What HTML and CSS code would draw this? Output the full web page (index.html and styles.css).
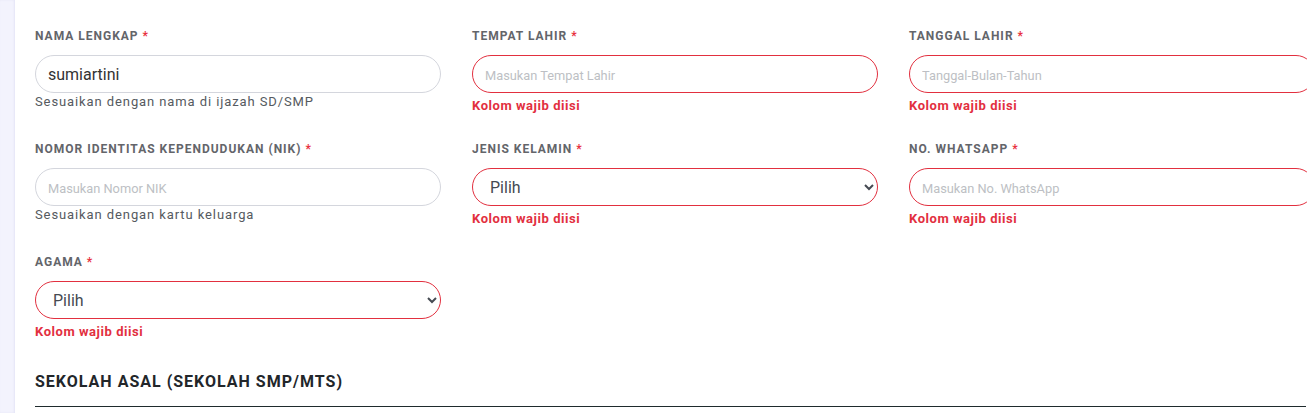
FILE: index.html
```html
<!DOCTYPE html>
<html lang="id">
<head>
<meta charset="utf-8">
<title>Formulir</title>
<link rel="stylesheet" href="styles.css">
</head>
<body>
<div class="page">
  <aside class="strip"></aside>
  <main class="content">
    <div class="grid">
      <div class="field">
        <label class="label">Nama Lengkap <span class="req">*</span></label>
        <input class="control" type="text" value="sumiartini">
        <div class="help">Sesuaikan dengan nama di ijazah SD/SMP</div>
      </div>
      <div class="field">
        <label class="label">Tempat Lahir <span class="req">*</span></label>
        <input class="control invalid" type="text" placeholder="Masukan Tempat Lahir">
        <div class="error">Kolom wajib diisi</div>
      </div>
      <div class="field">
        <label class="label">Tanggal Lahir <span class="req">*</span></label>
        <input class="control invalid" type="text" placeholder="Tanggal-Bulan-Tahun">
        <div class="error">Kolom wajib diisi</div>
      </div>

      <div class="field">
        <label class="label">Nomor Identitas Kependudukan (NIK) <span class="req">*</span></label>
        <input class="control" type="text" placeholder="Masukan Nomor NIK">
        <div class="help">Sesuaikan dengan kartu keluarga</div>
      </div>
      <div class="field">
        <label class="label">Jenis Kelamin <span class="req">*</span></label>
        <select class="control select invalid"><option>Pilih</option></select>
        <div class="error">Kolom wajib diisi</div>
      </div>
      <div class="field">
        <label class="label">No. WhatsApp <span class="req">*</span></label>
        <input class="control invalid" type="text" placeholder="Masukan No. WhatsApp">
        <div class="error">Kolom wajib diisi</div>
      </div>

      <div class="field">
        <label class="label">Agama <span class="req">*</span></label>
        <select class="control select invalid"><option>Pilih</option></select>
        <div class="error">Kolom wajib diisi</div>
      </div>
    </div>

    <h2 class="section-title">Sekolah Asal (Sekolah SMP/MTS)</h2>
  </main>
</div>
</body>
</html>
```

FILE: styles.css
```css
html, body {
  margin: 0;
  padding: 0;
  background: #ffffff;
  overflow: hidden;
}
body {
  font-family: Roboto, "Liberation Sans", Arial, sans-serif;
  color: #333;
}
.page {
  display: flex;
  min-height: 413px;
  width: 1340px;
}
.strip {
  width: 15px;
  flex: none;
  background: #f3f3fd;
  box-shadow: inset -1px 0 2px rgba(200, 200, 235, 0.35);
}
.content {
  flex: none;
  width: 1281px;
  padding: 27px 0 0 20px;
}
.grid {
  display: grid;
  grid-template-columns: 407px 407px 407px;
  column-gap: 30px;
  row-gap: 26px;
}
.field {
  display: flex;
  flex-direction: column;
}
.label {
  font-size: 12px;
  line-height: 18px;
  font-weight: 700;
  text-transform: uppercase;
  letter-spacing: 1px;
  color: #63656a;
  margin-bottom: 10px;
}
.req {
  color: #e8313e;
}
.control {
  box-sizing: border-box;
  width: 406px;
  height: 38px;
  border: 1px solid #d4d6dd;
  border-radius: 19px;
  padding: 0 12px;
  font-family: Roboto, "Liberation Sans", Arial, sans-serif;
  font-size: 16px;
  color: #333;
  background: #fff;
  outline: none;
}
.control::placeholder {
  font-size: 12.8px;
  color: #bdbfc4;
}
.control.invalid {
  border-color: #e2303f;
}
.select {
  padding-left: 13px;
  color: #454a52;
}
.help {
  margin-top: 1px;
  font-size: 13px;
  line-height: 16px;
  letter-spacing: 0.9px;
  color: #555a60;
}
.error {
  margin-top: 5px;
  font-size: 13px;
  line-height: 16px;
  font-weight: 700;
  letter-spacing: 0.55px;
  color: #e2303f;
}
.section-title {
  margin: 30px 0 0 0;
  padding-bottom: 12px;
  width: 1271px;
  border-bottom: 1px solid #1f2b2d;
  font-size: 16px;
  line-height: 24px;
  font-weight: 700;
  letter-spacing: 1px;
  text-transform: uppercase;
  color: #22262a;
}
```
